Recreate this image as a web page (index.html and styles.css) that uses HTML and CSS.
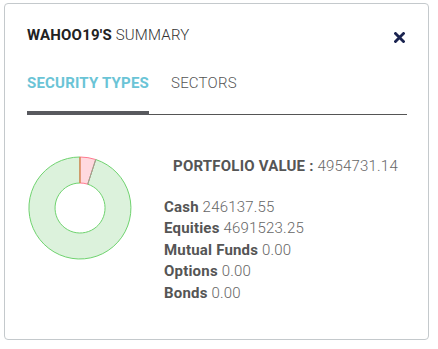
FILE: index.html
```html
<!doctype html>
<html lang="en">
  <head>
    <meta charset="UTF-8" />
    <title>Summary</title>
    <link rel="stylesheet" href="styles.css">
  </head>
  <body>
    <div class="card">
      <div class="card-header">
        <h2 class="title"><b>WAHOO19'S</b> SUMMARY</h2>
        <svg class="close" width="11" height="11" viewBox="0 0 11 11">
          <path d="M 1.5 1.5 L 9.5 9.5 M 9.5 1.5 L 1.5 9.5" stroke="#1b2450" stroke-width="2.8" stroke-linecap="square" />
        </svg>
      </div>

      <div class="tabs">
        <div class="tab active">SECURITY TYPES</div>
        <div class="tab">SECTORS</div>
      </div>

      <div class="summary">
        <svg class="donut" width="106" height="106" viewBox="-53 -53 106 106">
          <!-- equities -->
          <path d="M 15.7 -48.5 A 51 51 0 1 1 0 -51 L 0 -25 A 25 25 0 1 0 7.7 -23.8 Z"
                fill="#dcf2dc" stroke="#6fd36f" stroke-width="1" />
          <!-- cash -->
          <path d="M 0 -51 A 51 51 0 0 1 15.7 -48.5 L 7.7 -23.8 A 25 25 0 0 0 0 -25 Z"
                fill="#ffd9df" stroke="#ff7a90" stroke-width="1" />
          <line x1="0" y1="-51" x2="0" y2="-25" stroke="#c98a3a" stroke-width="1" />
          <line x1="15.7" y1="-48.5" x2="7.7" y2="-23.8" stroke="#8fa88f" stroke-width="1" />
        </svg>

        <div class="figures">
          <div class="total"><b>PORTFOLIO VALUE :</b> 4954731.14</div>
          <ul class="breakdown">
            <li><b>Cash</b> 246137.55</li>
            <li><b>Equities</b> 4691523.25</li>
            <li><b>Mutual Funds</b> 0.00</li>
            <li><b>Options</b> 0.00</li>
            <li><b>Bonds</b> 0.00</li>
          </ul>
        </div>
      </div>
    </div>
  </body>
</html>
```

FILE: styles.css
```css
body {
  margin: 0;
  padding: 3px 0 0 4px;
  font-family: Roboto, "Liberation Sans", sans-serif;
  color: #555;
  background: #fff;
}
.card {
  box-sizing: border-box;
  width: 425px;
  height: 337px;
  border: 1px solid #c4c9cc;
  border-radius: 4px;
  padding: 22px 21px 0 22px;
}
.card-header {
  display: flex;
  justify-content: space-between;
  align-items: flex-start;
  height: 18px;
}
.title {
  margin: 0;
  font-size: 15px;
  line-height: 18px;
  font-weight: 300;
  letter-spacing: 0.2px;
  color: #333;
}
.title b {
  font-weight: 700;
  color: #222;
}
.close {
  display: block;
  margin: 6px 2px 0 0;
}
.tabs {
  display: flex;
  gap: 22px;
  margin-top: 30px;
  border-bottom: 1px solid #555;
}
.tab {
  font-size: 15px;
  line-height: 18px;
  font-weight: 300;
  letter-spacing: 0.2px;
  color: #555;
  padding-bottom: 19px;
  margin-bottom: -1px;
  border-bottom: 4px solid transparent;
}
.tab.active {
  color: #6ac4d6;
  font-weight: 700;
  border-bottom-color: #58595e;
}
.summary {
  display: flex;
  margin-top: 39px;
}
.donut {
  margin: 1px 0 0 0;
  display: block;
}
.figures {
  flex: 1;
  margin-left: 31px;
  font-size: 15px;
  font-weight: 300;
  letter-spacing: 0.2px;
  color: #666;
}
.figures b {
  color: #555;
  font-weight: 700;
}
.total {
  text-align: center;
  margin-top: 3px;
}
.breakdown {
  list-style: none;
  margin: 22px 0 0 0;
  padding: 0;
  line-height: 21.4px;
}
```
